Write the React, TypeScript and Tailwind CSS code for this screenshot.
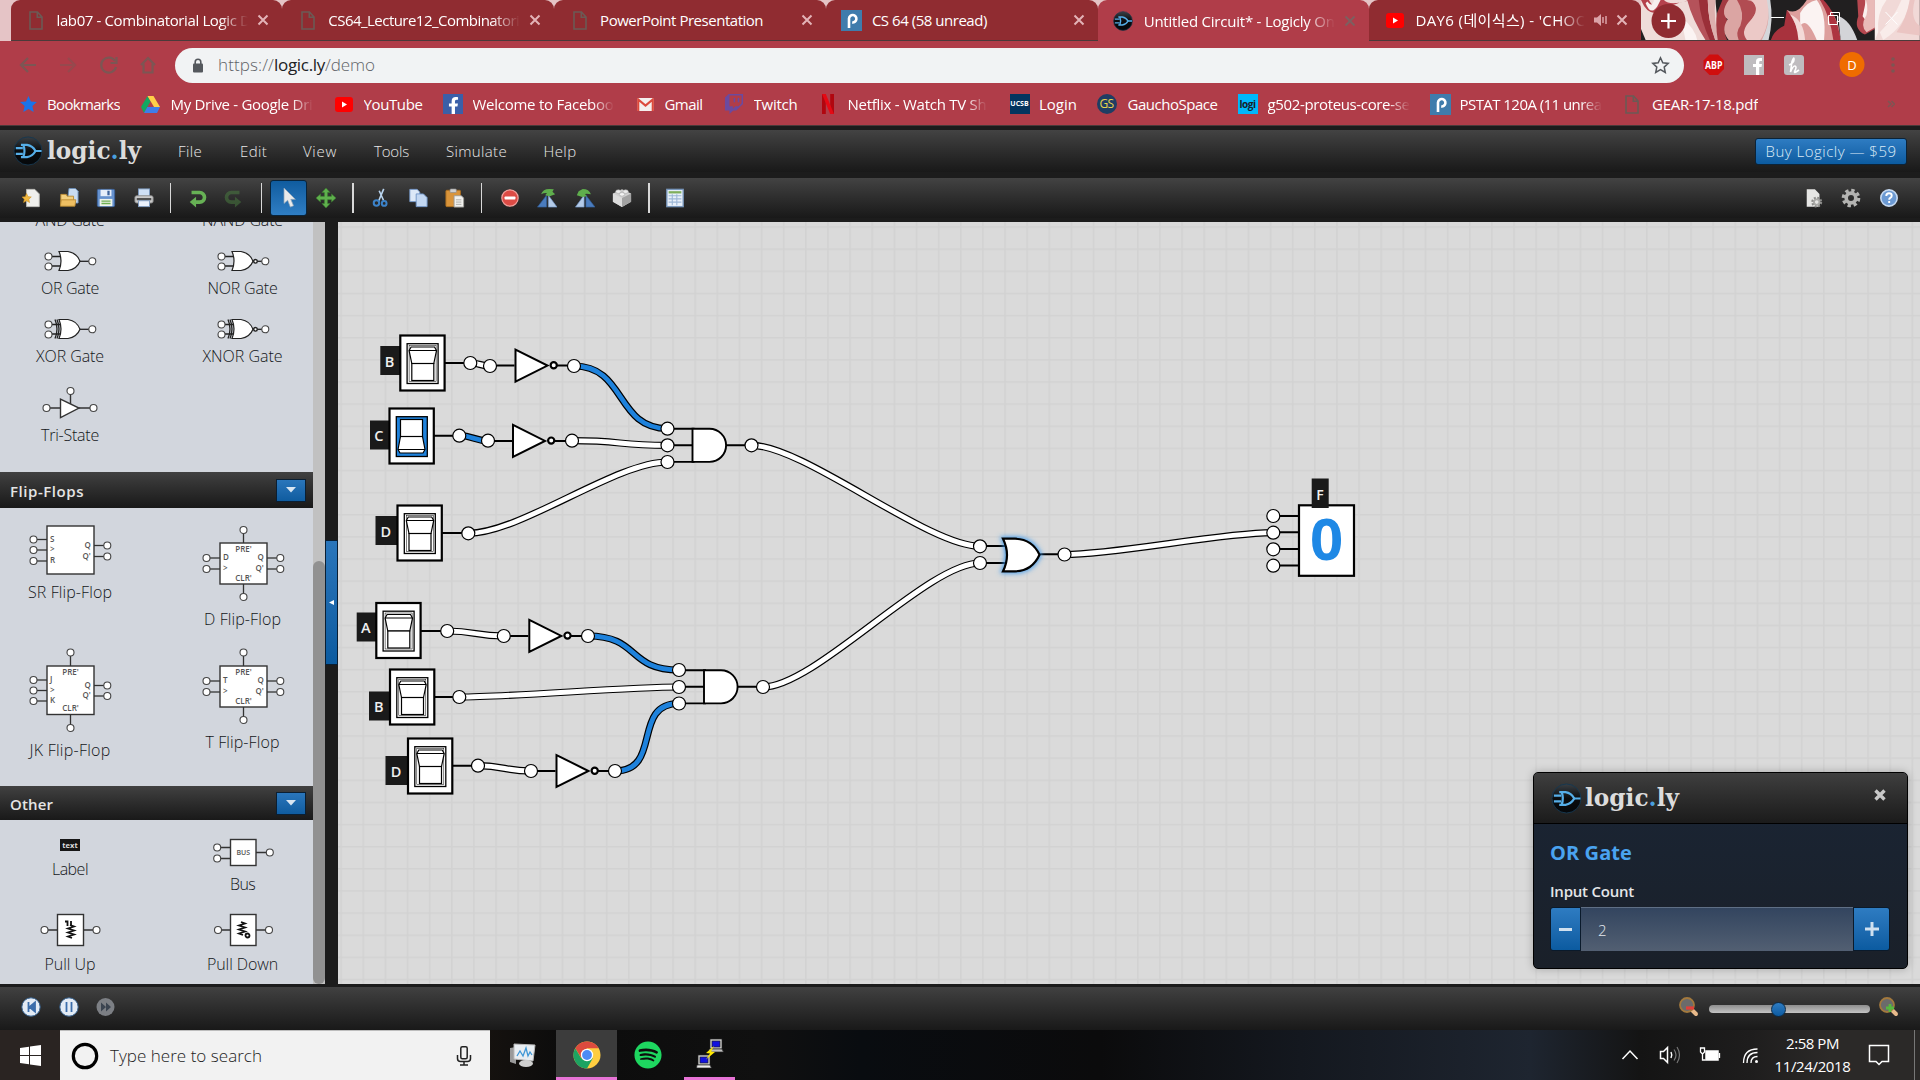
import React, { useLayoutEffect, useRef, useState } from "react";
import { FaSpotify, FaFacebookF, FaTwitch } from "react-icons/fa";

const UI = "font-['Open_Sans','Noto_Sans_CJK_KR',sans-serif]";

/** Single line of text whose tracking is adjusted so that it spans `w` pixels. */
function Fit({ w, className = "", children }: { w: number; className?: string; children: string }) {
  const ref = useRef<HTMLSpanElement>(null);
  const [ls, setLs] = useState(0);
  useLayoutEffect(() => {
    const el = ref.current;
    if (!el) return;
    const n = el.getBoundingClientRect().width;
    setLs((w - n) / children.length);
  }, []);
  return (
    <span ref={ref} className={"inline-block shrink-0 whitespace-nowrap " + className} style={{ letterSpacing: ls }}>
      {children}
    </span>
  );
}

const DocIcon = () => (
  <svg width="14" height="19" viewBox="0 0 14 19" fill="none" stroke="#6b5a55" strokeWidth="1.6">
    <path d="M1 1h7.5L13 6v12H1zM8.300 1v5.200H13" />
  </svg>
);
const PIcon = () => (
  <svg width="21" height="21" viewBox="0 0 21 21">
    <rect width="21" height="21" fill="#3f7cac" />
    <path d="M8 18V8.500a3.700 3.700 0 1 1 3.200 3.900" fill="none" stroke="#fff" strokeWidth="2.600" />
  </svg>
);
const YtIcon = () => (
  <svg width="18" height="15" viewBox="0 0 18 15">
    <rect width="18" height="15" rx="3" fill="#f00" />
    <path d="M7 4.500l5 3-5 3z" fill="#fff" />
  </svg>
);
const LogoMark = ({ size }: { size: number }) => (
  <svg width={size} height={size} viewBox="-16 -16 32 32" className="shrink-0">
    <defs>
      <linearGradient id="mark" x1="0" y1="0" x2="0" y2="1">
        <stop offset="0" stopColor="#3a3f44" />
        <stop offset=".5" stopColor="#0a0c0e" />
        <stop offset="1" stopColor="#05080b" />
      </linearGradient>
    </defs>
    <circle r="15" fill="url(#mark)" stroke="#17384f" strokeWidth="1" />
    <g fill="none" stroke="#55aee8" strokeWidth="2.300">
      <path d="M-13-3h7.500M-13 3h7.500M7 0h7.500" />
      <path d="M-7.500-6.500H-1Q5-5.500 8 0Q5 5.500-1 6.500H-7.500M-5-6.500Q-2.500 0-5 6.500" />
    </g>
  </svg>
);

const CloseX = ({ color = "#dba3a8" }: { color?: string }) => (
  <svg width="12" height="12" viewBox="0 0 12 12" stroke={color} strokeWidth="2" className="shrink-0">
    <path d="M1.500 1.500l9 9M10.500 1.500l-9 9" />
  </svg>
);

const fade = "[mask-image:linear-gradient(90deg,#000_85%,transparent)]";

function Tab({ icon, title, w, active, audio, sep, clip }: any) {
  return (
    <div
      className={
        "relative flex h-[41px] w-[271.8px] shrink-0 items-center rounded-t-[9px] pr-[13px] " +
        (active ? "bg-[#b03d49]" : "border-b border-[#4b3a3a] bg-[#902c31]")
      }
    >
      <div className="flex w-[46px] shrink-0 items-center justify-center pl-[5px]">{icon}</div>
      <div className={"flex-1 overflow-hidden text-[15px] leading-[24px] text-white " + (clip ? fade : "")}>
        <Fit w={w}>{title}</Fit>
      </div>
      {audio && (
        <svg width="14" height="14" viewBox="0 0 14 14" className="ml-[9px] mr-[8px] shrink-0" fill="#dba3a8">
          <path d="M0 4.500h3L7 1v12L3 9.500H0z" />
          <path d="M9 4v6M12 3v8" stroke="#dba3a8" strokeWidth="1.500" />
        </svg>
      )}
      <div className={"flex w-[12px] justify-center " + (audio ? "" : "ml-[9px]")}>
        <CloseX color={active ? "#7d5f60" : "#e3b3b7"} />
      </div>
      {sep && <div className="absolute top-[9px] right-[-1px] h-[25px] w-px bg-[#b9696f]" />}
    </div>
  );
}

function Petals() {
  return (
    <svg className="absolute inset-0 h-full w-full" viewBox="61 0 839 124" preserveAspectRatio="none">
      <rect x="61" width="839" height="124" fill="#211f20" />
      <path d="M61 0H285L296 124H75L61 90z" fill="#efdcd9" />
      <path d="M61 0Q85 60 130 30T235 0L205 0Q150 20 130 0H110Q100 30 85 0z" fill="#b5414c" />
      <path d="M75 10Q90 50 110 20L120 0H100Q95 25 80 5z" fill="#f7efee" />
      <path d="M200 0Q215 60 255 124H275Q245 60 240 0z" fill="#b5525a" />
      <path d="M235 0Q240 60 268 124H285Q262 60 262 0z" fill="#9a2f38" />
      <path d="M262 0H285Q278 60 296 124H284Q262 60 262 0z" fill="#ddb0ae" />
      <path d="M180 50Q225 90 230 124H195z" fill="#fbf4f3" />
      <path d="M306 0H330Q310 40 322 70Q305 95 320 124H292Q284 70 290 40z" fill="#a33a41" />
      <path d="M325 0Q298 40 322 60Q300 95 325 124H440Q450 80 445 0z" fill="#dba5a3" />
      <path d="M350 0Q375 40 360 80Q345 100 355 124H380Q370 90 400 50T380 0z" fill="#b14c52" />
      <path d="M392 0Q425 30 385 70Q360 100 380 124H420Q450 80 445 0z" fill="#ecc9c7" />
      <path d="M440 0Q452 60 435 100L425 124H445Q460 60 450 0z" fill="#d5d6da" />
      <path d="M452 124Q460 95 492 80L500 30L528 65L540 124z" fill="#a8323d" />
      <path d="M500 30Q530 50 560 0H600Q640 30 655 80L662 124H540Q530 70 500 30z" fill="#dd9f9d" />
      <path d="M540 40Q560 5 590 0Q620 40 612 124H590Q560 50 540 80z" fill="#fbf3f2" />
      <path d="M510 45Q550 60 555 124H535Q530 70 510 45z" fill="#f3dad8" />
      <path d="M600 0H610Q650 40 662 124H640Q630 50 600 0z" fill="#ad3541" />
      <path d="M655 50Q690 60 712 124H662z" fill="#d3d4d8" />
      <path d="M712 0H765V90L735 107Q700 90 715 50z" fill="#b5474f" />
      <path d="M735 0H765V85L740 100Q720 80 738 50z" fill="#e9bab8" />
      <path d="M738 0Q748 30 735 60L728 50Q735 20 738 0z" fill="#fbf0ee" />
      <rect x="765" width="135" height="124" fill="#f1d9d7" />
      <path d="M765 0H800Q770 40 775 100L765 124z" fill="#faf0ee" />
      <path d="M845 0Q820 60 780 100L790 124Q860 80 870 0z" fill="#f9ecea" />
      <path d="M870 0Q860 60 830 100L900 110V80Q870 60 885 0z" fill="#ebc5c3" />
    </svg>
  );
}

function TabStrip() {
  return (
    <div className="relative flex h-[41px] bg-[#e5c4c6]">
      <div className="w-[10.500px] shrink-0" />
      <Tab sep clip icon={<DocIcon />} title="lab07 - Combinatorial Logic D" w={194} />
      <Tab sep clip icon={<DocIcon />} title="CS64_Lecture12_Combinatori" w={191} />
      <Tab sep icon={<DocIcon />} title="PowerPoint Presentation" w={163} />
      <Tab icon={<PIcon />} title="CS 64 (58 unread)" w={115} />
      <Tab active clip icon={<LogoMark size={20} />} title="Untitled Circuit* - Logicly On" w={191} />
      <Tab clip audio icon={<YtIcon />} title="DAY6 (데이식스) - 'CHOC" w={170} />
      <div className="relative flex-1 overflow-hidden border-b border-[#4b3a3a]">
        <Petals />
        <svg className="absolute inset-0" width="280" height="41" viewBox="1641 0 280 41" fill="none">
          <circle cx="1668.500" cy="21" r="17" fill="#902c31" />
          <path d="M1661 21h15M1668.500 13.500v15" stroke="#fff" strokeWidth="2.200" />
          <g stroke="#fff" strokeWidth="1">
            <path d="M1771 17.500h13M1828.500 15.500h9v9h-9zM1830.500 15.500v-3h9v9h-2M1885.500 12l12 12.500M1897.500 12l-12 12.500" />
          </g>
        </svg>
      </div>
    </div>
  );
}

function AddressBar() {
  return (
    <div className="flex h-[43px] items-center bg-[#b03d49] pt-[5px]">
      <svg width="175" height="38" viewBox="0 46 175 38" fill="none" stroke="#7c5654" strokeWidth="2.200" className="shrink-0">
        <path d="M36 65H21M28 58l-7 7 7 7" />
        <path d="M60 65h14M68 58l7 7-7 7" stroke="#96494e" />
        <path d="M115 61a7.500 7.500 0 1 0 1 6M116.500 57v6h-6" />
        <path d="M141 65l7-7 7 7M143.500 63.500V72.500h9V63.500" />
      </svg>
      <div className="flex h-[35px] w-[1509px] items-center rounded-full bg-[#f1f3f4] pr-[14px] pl-[17px]">
        <svg width="12" height="15" viewBox="0 0 12 15">
          <rect x="1" y="5.500" width="10" height="9" rx="1" fill="#54585d" />
          <path d="M3.200 6V4a2.800 2.800 0 0 1 5.600 0v2" fill="none" stroke="#54585d" strokeWidth="1.600" />
        </svg>
        <div className="ml-[14px] flex flex-1 text-[17px] leading-[24px] font-light text-[#5f6368]">
          <Fit w={56}>https://</Fit>
          <Fit w={51} className="font-normal text-[#202124]">logic.ly</Fit>
          <Fit w={50}>/demo</Fit>
        </div>
        <svg width="19" height="18" viewBox="0 0 19 18" fill="none" stroke="#54585d" strokeWidth="1.500">
          <path d="M9.500 1.800l2.300 5 5.400.6-4 3.700 1.100 5.400-4.800-2.800-4.800 2.800 1.100-5.400-4-3.700 5.400-.6z" />
        </svg>
      </div>
      <svg width="236" height="38" viewBox="1684 46 236 38" className="shrink-0">
        <path d="M1697.500 54.500h8.500l6 6v8.500l-6 6h-8.500l-6-6v-8.500z" transform="translate(12)" fill="#d00e0e" />
        <text x="1713.800" y="69" textAnchor="middle" fontSize="10.500" fontWeight="700" fill="#fff" fontFamily="Open Sans" textLength="17.500" lengthAdjust="spacingAndGlyphs">ABP</text>
        <rect x="1744" y="55" width="20" height="20" fill="#bfbcbf" />
        <path d="M1756 75v-8h-3v-3h3v-2.500q0-3.500 3.500-3.500h2.500v3h-1.800q-1 0-1 1.200v1.800h2.800l-.5 3h-2.300v8z" fill="#fff" />
        <rect x="1784" y="55" width="20" height="20" rx="3" fill="#bfbcbf" />
        <path d="M1789 65q5-2 5-5.500t-2 2l-1.500 10.500q2.500-6.500 4.500-6t0 4.500 4-.5" fill="none" stroke="#fff" strokeWidth="1.600" />
        <circle cx="1852" cy="64.500" r="12.500" fill="#ef6c00" />
        <text x="1852" y="69.500" textAnchor="middle" fontSize="13" fill="#fff" fontFamily="Open Sans">D</text>
        <g fill="#7c5654">
          <circle cx="1893" cy="59" r="1.800" />
          <circle cx="1893" cy="65" r="1.800" />
          <circle cx="1893" cy="71" r="1.800" />
        </g>
      </svg>
    </div>
  );
}

const bookmarks: { cell: string; ico: string; icon: React.ReactNode; text: string; w: number; clip?: boolean }[] = [
  { cell: "w-[121px]", ico: "w-[27px]", text: "Bookmarks", w: 73, icon: (
    <svg width="17" height="16" viewBox="0 0 17 16"><path d="M8.500 0l2.400 5.400 6 .6-4.500 4 1.300 6-5.200-3.100L3.300 16l1.300-6L0 6l6-.6z" fill="#1a73e8" /></svg>) },
  { cell: "w-[194px]", ico: "w-[29.500px]", text: "My Drive - Google Dri", w: 142, clip: true, icon: (
    <svg width="19" height="17" viewBox="0 0 19 17"><path d="M6.500 0L0 11l3 6 6.500-11.500z" fill="#11a861" /><path d="M6.500 0h6L19 11h-6z" fill="#ffcf48" /><path d="M3 17h13l3-6H6.300z" fill="#3f7de8" /></svg>) },
  { cell: "w-[108px]", ico: "w-[28.500px]", text: "YouTube", w: 59, icon: <YtIcon /> },
  { cell: "w-[193.500px]", ico: "w-[29.500px]", text: "Welcome to Faceboo", w: 141, clip: true, icon: (
    <div className="flex h-[20px] w-[20px] items-end justify-center overflow-hidden bg-[#3b5fa8] text-white"><FaFacebookF size={17} /></div>) },
  { cell: "w-[87px]", ico: "w-[28px]", text: "Gmail", w: 38, icon: (
    <svg width="17" height="13" viewBox="0 0 17 13"><rect width="17" height="13" rx="1" fill="#f4efee" /><path d="M1.200 13V1.500l7.300 6 7.300-6V13" fill="none" stroke="#dc4a3d" strokeWidth="2.200" /></svg>) },
  { cell: "w-[98px]", ico: "w-[30px]", text: "Twitch", w: 44, icon: <FaTwitch size={20} color="#6b4a9f" /> },
  { cell: "w-[188px]", ico: "w-[26px]", text: "Netflix - Watch TV Sh", w: 139, clip: true, icon: (
    <svg width="12" height="20" viewBox="0 0 12 20"><path d="M0 0h3.800v20H0zM8.200 0H12v20H8.200z" fill="#b1060f" /><path d="M0 0h3.800L12 20H8.200z" fill="#e50914" /></svg>) },
  { cell: "w-[87px]", ico: "w-[29.500px]", text: "Login", w: 38, icon: (
    <div className="flex h-[20px] w-[20px] items-center justify-center bg-[#04355f] text-[7px] font-bold text-white">UCSB</div>) },
  { cell: "w-[141px]", ico: "w-[31px]", text: "GauchoSpace", w: 90, icon: (
    <div className="flex h-[20px] w-[20px] items-center justify-center rounded-full bg-[#1f3d63] text-[12px] tracking-tighter text-[#e8d44d]">GS</div>) },
  { cell: "w-[192px]", ico: "w-[30px]", text: "g502-proteus-core-se", w: 142, clip: true, icon: (
    <div className="flex h-[20px] w-[20px] items-center justify-center bg-[#00b8fc] text-[10px] leading-none font-bold tracking-tighter text-[#17202a]">logi</div>) },
  { cell: "w-[195px]", ico: "w-[30px]", text: "PSTAT 120A (11 unrea", w: 142, clip: true, icon: <PIcon /> },
  { cell: "w-[140px]", ico: "w-[27.500px]", text: "GEAR-17-18.pdf", w: 106, icon: <DocIcon /> },
];

function Bookmarks() {
  return (
    <div className="flex h-[42px] items-center border-b border-[#4b3a3a] bg-[#b03d49] pb-[1px] pl-[20px]">
      {bookmarks.map((b) => (
        <div key={b.text} className={"flex shrink-0 items-center " + b.cell}>
          <div className={"flex shrink-0 items-center " + b.ico}>{b.icon}</div>
          <div className={"overflow-hidden text-[15px] leading-[24px] text-white " + (b.clip ? fade : "")}>
            <Fit w={b.w}>{b.text}</Fit>
          </div>
        </div>
      ))}
      <svg width="8" height="8" viewBox="0 0 8 8" className="mr-[25px] ml-auto" fill="none" stroke="#7c5654" strokeWidth="1.500">
        <path d="M1 1l3 3-3 3M4.500 1l3 3-3 3" />
      </svg>
    </div>
  );
}

function Wordmark({ w }: { w: number }) {
  return (
    <svg width={w + 4} height="32" viewBox={`0 0 ${w + 4} 32`} className="shrink-0">
      <text x="0" y="24" fontFamily="DejaVu Serif" fontWeight="700" fontSize="23.500" fill="#dcdcdc" textLength={w} lengthAdjust="spacingAndGlyphs">
        logic<tspan fill="#4a9fdf">.</tspan>ly
      </text>
    </svg>
  );
}

const menu = [
  { t: "File", cell: "w-[62px]", w: 24 },
  { t: "Edit", cell: "w-[63px]", w: 27 },
  { t: "View", cell: "w-[71px]", w: 34 },
  { t: "Tools", cell: "w-[72px]", w: 35 },
  { t: "Simulate", cell: "w-[97.500px]", w: 61 },
  { t: "Help", cell: "w-[60px]", w: 33 },
];

function MenuBar() {
  return (
    <div className="flex h-[42px] items-center bg-linear-to-b from-[#434343] to-[#191919] pl-[13px]">
      <LogoMark size={30} />
      <div className="w-[134px] pl-[4px]">
        <Wordmark w={94} />
      </div>
      {menu.map((m) => (
        <div key={m.t} className={"pl-px text-[15px] font-light text-[#e8e8e8] " + m.cell}>
          <Fit w={m.w}>{m.t}</Fit>
        </div>
      ))}
      <div className="mr-[13px] ml-auto flex h-[27px] w-[152px] items-center justify-center rounded-[3px] border border-[#0b2338] bg-linear-to-b from-[#2e7cc2] to-[#0b5ba0] text-[15px] font-light text-[#dcebf7]">
        <Fit w={131}>Buy Logicly — $59</Fit>
      </div>
    </div>
  );
}

const Slot = ({ className, children }: { className: string; children: React.ReactNode }) => (
  <div className={"flex shrink-0 items-center justify-center " + className}>
    <svg width="20" height="20" viewBox="0 0 22 22">{children}</svg>
  </div>
);
const Bar = () => <div className="h-[30px] w-[1.5px] shrink-0 bg-[#d8d8d8]" />;

function ToolBar() {
  return (
    <div className="flex h-[40px] items-center bg-linear-to-b from-[#434343] to-[#191919] pl-[12.500px]">
      <Slot className="w-[38px]">
        <path d="M5 1.500h9l5 5v14H5z" fill="#efefec" stroke="#b9b9b5" />
        <path d="M5 6l1.600 3.500 3.600.3-2.700 2.500.8 3.700L5 14l-3.300 2 .8-3.700L0 9.800l3.500-.3z" fill="#f0b840" stroke="#c98c1c" strokeWidth=".6" />
      </Slot>
      <Slot className="w-[37px]">
        <path d="M11 .5h7l3 3v13H9z" fill="#c9dcf1" stroke="#6b90bb" />
        <path d="M2 7h6l1 2h7v10H2z" fill="#f2cf7f" stroke="#b98a32" />
        <path d="M1.500 20l1-7h16l-1 7z" fill="#eebf62" stroke="#b98a32" />
      </Slot>
      <Slot className="w-[37px]">
        <rect x="1.500" y="1.500" width="19" height="19" rx="1.500" fill="#6692cf" stroke="#3d639c" />
        <rect x="5" y="2" width="12" height="7" fill="#e6eefa" />
        <rect x="12.500" y="3" width="2.500" height="5" fill="#3d639c" />
        <rect x="4" y="12" width="14" height="8" fill="#eef3ea" />
        <path d="M6 14.500h10M6 17h10" stroke="#6fb052" strokeWidth="1.500" />
      </Slot>
      <Slot className="w-[38px]">
        <rect x="5" y="1" width="12" height="9" fill="#cfe0f5" stroke="#7d9ac0" />
        <rect x="1" y="8.500" width="20" height="8" rx="2" fill="#c9c9c9" stroke="#8b8b8b" />
        <rect x="3" y="11" width="16" height="2.500" fill="#505050" />
        <rect x="5" y="14" width="12" height="6.500" fill="#eaf1fb" stroke="#7d9ac0" />
      </Slot>
      <div className="w-[7px] shrink-0" />
      <Bar />
      <Slot className="ml-[7.500px] w-[37px]">
        <path d="M5 5h9a5 5 0 0 1 0 10.500H9" fill="none" stroke="#67b155" strokeWidth="4" />
        <path d="M10 9.500v12L3 15.500z" fill="#67b155" />
      </Slot>
      <Slot className="w-[37px] opacity-45">
        <path d="M17 5H8a5 5 0 0 0 0 10.500H13" fill="none" stroke="#4f8a44" strokeWidth="4" />
        <path d="M12 9.500v12l7-6z" fill="#4f8a44" />
      </Slot>
      <div className="w-[8px] shrink-0" />
      <Bar />
      <div className="ml-[8px] flex h-[36px] w-[37px] shrink-0 items-center justify-center rounded-[3px] border border-[#08243c] bg-linear-to-b from-[#0f5c9f] to-[#2f7ec4]">
        <svg width="20" height="20" viewBox="0 0 22 22">
          <path d="M5.500 0v17l4-3.500 3 7.500 3.500-1.500-3-7H18z" fill="#eaeaea" stroke="#8fa6ba" strokeWidth=".8" />
        </svg>
      </div>
      <Slot className="w-[37px]">
        <path d="M11 0l4.500 5H12.800v4.200H17V6.500l5 4.500-5 4.500v-2.700h-4.200V17h2.700L11 22l-4.500-5h2.700v-4.200H5v2.700L0 11l5-4.500v2.700h4.200V5H6.500z" fill="#5fb04d" stroke="#3b7a30" strokeWidth=".7" />
      </Slot>
      <div className="w-[8px] shrink-0" />
      <Bar />
      <Slot className="ml-[8px] w-[38px]">
        <path d="M14 1L8.500 14M9 3l5 11" stroke="#b9d4ee" strokeWidth="1.800" />
        <circle cx="6" cy="16.500" r="3" fill="none" stroke="#3c82c8" strokeWidth="2.200" />
        <circle cx="14.500" cy="17" r="2.600" fill="none" stroke="#3c82c8" strokeWidth="2.200" />
      </Slot>
      <Slot className="w-[37px]">
        <path d="M2 1.500h8l3 3V15H2z" fill="#dce8f7" stroke="#6f94c6" />
        <path d="M9 6.500h8l4 4v10H9z" fill="#c2d7f2" stroke="#6f94c6" />
      </Slot>
      <Slot className="w-[37px]">
        <rect x="1" y="2.500" width="16" height="18" rx="1" fill="#d9943a" stroke="#a96c1e" />
        <rect x="5.500" y="1" width="7" height="4" rx="1" fill="#cfcfcf" stroke="#888" strokeWidth=".7" />
        <path d="M10 8.500h8l2.500 2.500v10H10z" fill="#f1f1ee" stroke="#9c9c98" />
        <path d="M12 13h6M12 15.500h6M12 18h6" stroke="#a9a9a4" />
      </Slot>
      <div className="w-[7px] shrink-0" />
      <Bar />
      <Slot className="ml-[9px] w-[37px]">
        <circle cx="11" cy="11" r="9" fill="#dc4b45" stroke="#f0a09c" strokeWidth="1.300" />
        <rect x="5" y="9.300" width="12" height="3.400" rx=".8" fill="#fff" />
      </Slot>
      <Slot className="w-[38px]">
        <path d="M10.500 8v13H.5z" fill="#4a7cbe" stroke="#2f5a94" strokeWidth=".7" />
        <path d="M12.500 8v13H22z" fill="#b4cbe8" stroke="#6f94c6" strokeWidth=".7" />
        <path d="M4.500 7q2-6 9-6l5 .5-1.500 2.500 3 3-6 2-5-1 2-2.500q-3-.5-6.500 1.500z" fill="#5fae4d" />
      </Slot>
      <Slot className="w-[37px]">
        <path d="M12 8v13h10z" fill="#4a7cbe" stroke="#2f5a94" strokeWidth=".7" />
        <path d="M10 8v13H.5z" fill="#b4cbe8" stroke="#6f94c6" strokeWidth=".7" />
        <path d="M17.500 7q-2-6-9-6L4 3.500 2 8l6 2 5-1-2-2.500q3-.5 6.500.5z" fill="#5fae4d" />
      </Slot>
      <Slot className="w-[37px]">
        <path d="M1 6l10-4.500L21 6v9l-10 6L1 15z" fill="#d0d0d0" />
        <path d="M11 11l10-5v9l-10 6z" fill="#a2a2a2" />
        <path d="M1 6l10 5v10L1 15z" fill="#dcdcdc" />
        <ellipse cx="7" cy="4" rx="3" ry="2" fill="#ececec" stroke="#aaa" strokeWidth=".7" />
        <ellipse cx="15" cy="4" rx="3" ry="2" fill="#ececec" stroke="#aaa" strokeWidth=".7" />
        <ellipse cx="11" cy="7" rx="3" ry="2" fill="#f4f4f4" stroke="#aaa" strokeWidth=".7" />
      </Slot>
      <div className="w-[8px] shrink-0" />
      <Bar />
      <Slot className="ml-[7px] w-[37px]">
        <rect x="2" y="1.500" width="18" height="19" fill="#e8f0fa" stroke="#7896bb" strokeWidth="1.500" />
        <rect x="4" y="3.500" width="14" height="2.500" fill="#7fae5c" />
        <path d="M4 8.500h14M4 12h14M4 15.500h14M8 7v12M13 7v12" stroke="#9cb6d6" strokeWidth="1.200" />
      </Slot>
      <div className="mr-[13px] ml-auto flex">
        <Slot className="w-[36px]">
          <path d="M3 1.500h9l5 5v14H3z" fill="#e6e6e4" />
          <circle cx="14" cy="15.500" r="4.500" fill="none" stroke="#8c8c8a" strokeWidth="3" strokeDasharray="2 1.534" />
          <circle cx="14" cy="15.500" r="3" fill="none" stroke="#a9a9a6" strokeWidth="2" />
        </Slot>
        <Slot className="w-[38px]">
          <circle cx="11" cy="11" r="8.500" fill="none" stroke="#b4b4b2" strokeWidth="3.500" strokeDasharray="3.700 2.976" />
          <circle cx="11" cy="11" r="5.300" fill="none" stroke="#b4b4b2" strokeWidth="4" />
        </Slot>
        <Slot className="w-[37px]">
          <circle cx="11" cy="11" r="9" fill="#6c9ad3" stroke="#c5d8ef" strokeWidth="1.800" />
          <path d="M8 8.800q0-3 3-3t3 2.600q0 1.500-1.600 2.400-1.200.7-1.200 2M11.200 14.300v2.300" fill="none" stroke="#fff" strokeWidth="2.100" />
        </Slot>
      </div>
    </div>
  );
}

/* ---------- component palette ---------- */

const Pin = ({ x, y }: { x: number; y: number }) => <circle cx={x} cy={y} r="3.500" fill="#fff" stroke="#444" strokeWidth="1.100" />;

function MiniGate({ cy, xor, not }: { cy: number; xor?: boolean; not?: boolean }) {
  return (
    <g transform={`translate(0 ${cy})`} stroke="#222" strokeWidth="1.300" fill="none">
      <path d="M-20-4.500h11M-20 5h11" />
      <path d="M9 .3h11" />
      <path d="M-11-9.500H-2Q7-8 10 .3Q7 8-2 9.500H-11Q-7 0-11-9.500z" fill="#fff" strokeWidth="1.200" />
      {xor && <path d="M-15-9.500Q-11 0-15 9.500M-13-9.500Q-9 0-13 9.500" />}
      {not && <circle cx="12.500" cy=".3" r="1.800" fill="#fff" strokeWidth="1.400" />}
      <Pin x={-21.500} y={-4.500} />
      <Pin x={-21.500} y={5.500} />
      <Pin x={22.300} y={0.300} />
    </g>
  );
}

function MiniFF({ t, b, l, r, ins, pre }: { t: number; b: number; l: number[]; r: number[]; ins: string[]; pre?: [number, number] }) {
  const tx = { fontFamily: "Open Sans", fontSize: 8, fill: "#555", stroke: "none", fontWeight: 600 } as const;
  return (
    <g stroke="#333" strokeWidth="1.300" fill="none">
      {l.map((y) => <path key={y} d={`M-34 ${y}h11`} />)}
      {r.map((y) => <path key={y} d={`M24 ${y}h11`} />)}
      {pre && <path d={`M.500 ${pre[0]}V${t}M.500 ${b}V${pre[1]}`} />}
      <rect x="-23" y={t} width="47" height={b - t} fill="#fff" strokeWidth="1.400" />
      {l.map((y) => <Pin key={y} x={-36.500} y={y} />)}
      {r.map((y) => <Pin key={y} x={37.300} y={y} />)}
      {pre && <Pin x={0.500} y={pre[0]} />}
      {pre && <Pin x={0.500} y={pre[1]} />}
      {l.map((y, i) => <text key={y} {...tx} x="-20" y={y + 2.200}>{ins[i]}</text>)}
      <text {...tx} x="14.500" y={r[0] + 2.200}>Q</text>
      <text {...tx} x="12.500" y={r[1] + 2.200}>Q'</text>
      {pre && <text {...tx} x=".5" y={t + 9} textAnchor="middle">PRE'</text>}
      {pre && <text {...tx} x=".5" y={b - 3.500} textAnchor="middle">CLR'</text>}
    </g>
  );
}

function Item({ h, label, w, children }: { h: number; label: string; w: number; children?: React.ReactNode }) {
  return (
    <div className="flex flex-col items-center">
      <svg width="100" height={h} viewBox={`-50 0 100 ${h}`} className="shrink-0">{children}</svg>
      <div className="h-[22px] text-[16px] leading-[24px] font-light text-[#14161a]">
        <Fit w={w}>{label}</Fit>
      </div>
    </div>
  );
}
const Row = ({ children }: { children: React.ReactNode }) => (
  <div className="grid shrink-0 grid-cols-[140px_205px] items-start">{children}</div>
);
function Header({ title, w, className }: { title: string; w: number; className: string }) {
  return (
    <div className={"flex shrink-0 items-center justify-between bg-linear-to-b from-[#414141] to-[#191919] pr-[7px] pl-[10px] " + className}>
      <div className="pt-[2px] text-[15px] font-semibold text-[#e4e4e4]"><Fit w={w}>{title}</Fit></div>
      <div className="flex h-[23px] w-[30px] items-center justify-center border border-[#0a1f33] bg-linear-to-b from-[#2a76bb] to-[#0f5c9f]">
        <svg width="10" height="6" viewBox="0 0 10 6"><path d="M0 0h10L5 5.500z" fill="#d9e6f2" /></svg>
      </div>
    </div>
  );
}
const ZIG = "M-1-7l4 1.500-6 2 6 2-6 2 6 2-6 2 4 1.500";

function Sidebar() {
  return (
    <div className="flex h-[762px] w-[313px] shrink-0 flex-col overflow-hidden bg-[#d2d6dd]">
      <div className="-mt-[14px] grid shrink-0 grid-cols-[140px_205px]">
        <Item h={0} label="AND Gate" w={69} />
        <Item h={0} label="NAND Gate" w={81} />
      </div>
      <div className="h-px shrink-0" />
      <Row>
        <Item h={45} label="OR Gate" w={58}><MiniGate cy={30} /></Item>
        <Item h={45} label="NOR Gate" w={70}><MiniGate cy={30} not /></Item>
      </Row>
      <Row>
        <Item h={46} label="XOR Gate" w={68}><MiniGate cy={31} xor /></Item>
        <Item h={46} label="XNOR Gate" w={80}><MiniGate cy={31} xor not /></Item>
      </Row>
      <Row>
        <Item h={57} label="Tri-State" w={58}>
          <g stroke="#333" strokeWidth="1.400" fill="none">
            <path d="M-20 42H-9.500M9 42h11M.500 28v10" />
            <path d="M-9.500 33v18.500L9 42z" fill="#fff" />
            <Pin x={-23.500} y={42} /><Pin x={23.500} y={42} /><Pin x={0.500} y={25} />
          </g>
        </Item>
      </Row>
      <div className="h-[27px] shrink-0" />
      <Header title="Flip-Flops" w={74} className="h-[36px]" />
      <Row>
        <Item h={72} label="SR Flip-Flop" w={84}><MiniFF t={18} b={66} l={[31.500, 42, 53]} r={[37.500, 48.500]} ins={["S", ">", "R"]} /></Item>
        <Item h={99} label="D Flip-Flop" w={77}><MiniFF t={35} b={76} l={[50, 61]} r={[50, 61]} ins={["D", ">"]} pre={[22, 89]} /></Item>
      </Row>
      <Row>
        <Item h={109} label="JK Flip-Flop" w={81}><MiniFF t={37} b={85.500} l={[51, 61.500, 72]} r={[56.500, 67]} ins={["J", ">", "K"]} pre={[23.500, 99]} /></Item>
        <Item h={101} label="T Flip-Flop" w={74}><MiniFF t={37} b={78} l={[52, 63]} r={[52, 63]} ins={["T", ">"]} pre={[23.500, 91]} /></Item>
      </Row>
      <div className="h-[26px] shrink-0" />
      <Header title="Other" w={43} className="h-[34px]" />
      <Row>
        <Item h={37} label="Label" w={36}>
          <rect x="-10" y="19" width="20" height="12" fill="#161616" />
          <text x="0" y="27.500" textAnchor="middle" fontSize="7.500" fontWeight="700" fill="#ddd" fontFamily="Open Sans">text</text>
        </Item>
        <Item h={52} label="Bus" w={25}>
          <g stroke="#333" strokeWidth="1.400" fill="none">
            <path d="M-23 27.500h11M-23 38.500h11M13 32.500h11" />
            <rect x="-12.500" y="19.500" width="25.500" height="26" fill="#fff" />
            <Pin x={-25.800} y={27.500} /><Pin x={-25.800} y={38.500} /><Pin x={26.800} y={32.500} />
          </g>
          <text x=".3" y="34.800" textAnchor="middle" fontSize="7" fill="#555" fontFamily="Open Sans" fontWeight="600">BUS</text>
        </Item>
      </Row>
      <Row>
        <Item h={58} label="Pull Up" w={51}>
          <g stroke="#333" strokeWidth="1.400" fill="none">
            <path d="M-23 36h11M13 36h11" />
            <rect x="-12.500" y="20.500" width="26" height="31" fill="#fff" />
            <Pin x={-25.500} y={36} /><Pin x={26.500} y={36} />
            <path d={ZIG} transform="translate(1 38)" stroke="#111" strokeWidth="1.800" />
            <path d="M-5 27.500h2.500v4.500M1 27v4" stroke="#111" strokeWidth="1.800" />
          </g>
        </Item>
        <Item h={58} label="Pull Down" w={71}>
          <g stroke="#333" strokeWidth="1.400" fill="none">
            <path d="M-23 36h11M13 36h11" />
            <rect x="-12.500" y="20.500" width="25.500" height="31" fill="#fff" />
            <Pin x={-25} y={36} /><Pin x={26} y={36} />
            <path d={ZIG} transform="translate(-1 35)" stroke="#111" strokeWidth="1.800" />
            <circle cx="4.500" cy="41.500" r="2" stroke="#111" strokeWidth="1.800" />
          </g>
        </Item>
      </Row>
    </div>
  );
}

/* ---------- circuit canvas ---------- */

const BLUE = "#1e82dc";

function Switch({ x, y, on, name, lx, ly }: { x: number; y: number; on?: boolean; name: string; lx: number; ly: number }) {
  return (
    <g>
      <rect x={lx} y={ly} width={x - lx + 1} height="29" fill="#1a1a1a" />
      <text x={(lx + x) / 2 - 0.300} y={ly + 20.500} textAnchor="middle" fontSize="14.500" fontWeight="600" fill="#efefef" fontFamily="Open Sans">{name}</text>
      <g transform={`translate(${x} ${y})`} stroke="#000" fill="#fff">
        <rect x="1" y="1" width="44.300" height="55" strokeWidth="2.200" />
        <rect x="7.800" y="9.200" width="31" height="39.800" strokeWidth="1.300" fill={on ? BLUE : "#fff"} />
        {on ? (
          <g strokeWidth="1.200">
            <path d="M9.500 42L12 29h22l2.500 13-2 3.500h-23zM9.500 42h27" />
            <rect x="12" y="12" width="22" height="17" />
          </g>
        ) : (
          <g strokeWidth="1.200">
            <rect x="9.800" y="11" width="27" height="36" strokeWidth=".5" />
            <path d="M9.800 16l2-3.500h23.400l2 3.500-2.700 13h-22zM9.800 16h27.400" />
            <rect x="12.500" y="29" width="22" height="17" />
          </g>
        )}
      </g>
    </g>
  );
}

const P = ({ x, y }: { x: number; y: number }) => <circle cx={x} cy={y} r="6.500" fill="#fff" stroke="#000" strokeWidth="1.200" />;

function Wire({ a, b, on }: { a: [number, number]; b: [number, number]; on?: boolean }) {
  const dx = b[0] - a[0];
  const h = dx < 60 ? dx / 2 : Math.min(52, dx * 0.75);
  const d = `M${a[0]} ${a[1]}C${a[0] + h} ${a[1]} ${b[0] - h} ${b[1]} ${b[0]} ${b[1]}`;
  return (
    <g fill="none">
      <path d={d} stroke="#000" strokeWidth="7.200" />
      <path d={d} stroke={on ? BLUE : "#fff"} strokeWidth="4.800" />
    </g>
  );
}

const Not = ({ x, y, inX, outX }: { x: number; y: number; inX: number; outX: number }) => (
  <g stroke="#000" strokeWidth="2">
    <path d={`M${inX} ${y + 0.300}H${x}M${x + 41} ${y + 0.300}H${outX}`} />
    <path d={`M${x + 1} ${y - 15.700}v32l32-16z`} fill="#fff" strokeWidth="2" />
    <circle cx={x + 39.200} cy={y} r="3.100" fill="#fff" strokeWidth="2.200" />
  </g>
);

const And = ({ x, y, inX, outX }: { x: number; y: number; inX: number; outX: number }) => (
  <g stroke="#000" strokeWidth="1.900" fill="none">
    <path d={`M${inX} ${y - 16.600}H${x + 2}M${inX} ${y}H${x}M${inX} ${y + 16.600}H${x + 2}M${x + 33} ${y}H${outX}`} />
    <path d={`M${x} ${y - 16.600}h17a16.600 16.600 0 0 1 0 33.200h-17z`} fill="#fff" />
  </g>
);

const OR_BODY = "M1003 538.700H1015Q1032 539 1039.500 554.700Q1032 571 1015 571.300H1003Q1011 555 1003 538.700z";

function Canvas() {
  return (
    <svg width="1582" height="762" viewBox="338 222 1582 762" className="block">
      <defs>
        <pattern id="grid" x="340.300" y="226.300" width="22.130" height="22.130" patternUnits="userSpaceOnUse">
          <path d="M.8 0V22.130M0 .8H22.130" stroke="#d2d2d2" strokeWidth="1.500" />
        </pattern>
        <filter id="glow" x="-50%" y="-50%" width="200%" height="200%">
          <feGaussianBlur stdDeviation="2.500" />
        </filter>
      </defs>
      <rect x="338" y="222" width="1582" height="762" fill="#dadada" />
      <rect x="338" y="222" width="1582" height="762" fill="url(#grid)" />

      <g stroke="#000" strokeWidth="2">
        <path d="M445 363h25M434 435.700h25M442 533h26M421 631h26M434 697h25M453 765.700h25" />
        <path d="M980 546h26M980 563h26M1038 554.300h26M1273 516h26M1273 532.300h26M1273 549h26M1273 565.500h26" />
      </g>

      <Wire a={[470.300, 363]} b={[490, 366]} />
      <Wire a={[574, 366]} b={[667.500, 428.500]} on />
      <Wire a={[459.300, 435.700]} b={[488, 440.700]} on />
      <Wire a={[572, 440.700]} b={[667.500, 445.300]} />
      <Wire a={[468.300, 533.300]} b={[667.500, 462]} />
      <Wire a={[447.200, 631]} b={[503.800, 636]} />
      <Wire a={[588, 636]} b={[679, 670]} on />
      <Wire a={[459.300, 697]} b={[679, 687]} />
      <Wire a={[478, 765.700]} b={[531, 771]} />
      <Wire a={[615, 771]} b={[679, 703.500]} on />
      <Wire a={[751.500, 445.300]} b={[980, 546.300]} />
      <Wire a={[763, 687]} b={[980, 563]} />
      <Wire a={[1064.500, 554.500]} b={[1273.300, 532.700]} />

      <Not x={514.500} y={365.300} inX={490} outX={574} />
      <Not x={512} y={440.600} inX={488} outX={572} />
      <Not x={528.300} y={635.600} inX={504} outX={588} />
      <Not x={555.500} y={770.700} inX={531} outX={615} />
      <And x={692.500} y={445.300} inX={667} outX={751} />
      <And x={704} y={686.800} inX={679} outX={763} />

      <path d={OR_BODY} fill="#3d9bf0" stroke="#3d9bf0" strokeWidth="4" filter="url(#glow)" />
      <path d={OR_BODY} fill="#fff" stroke="#000" strokeWidth="2.200" />

      {[[470.300, 363], [490, 366], [574, 366], [459.300, 435.700], [488, 440.700], [572, 440.700], [468.300, 533.300],
        [667.500, 428.700], [667.500, 445.300], [667.500, 462], [751.500, 445.300], [447.200, 631], [503.800, 636], [588, 636],
        [459.300, 697], [478, 765.700], [531, 771], [615, 771], [679, 670], [679, 687], [679, 703.500], [763, 687],
        [980, 546.300], [980, 563], [1064.500, 554.500], [1273.300, 516], [1273.300, 532.700], [1273.300, 549.300], [1273.300, 565.700],
      ].map(([x, y]) => <P key={`${x}-${y}`} x={x} y={y} />)}

      <Switch x={399.300} y={334.500} name="B" lx={380.300} ly={346} />
      <Switch x={388.500} y={407.500} on name="C" lx={370} ly={420.500} />
      <Switch x={396.500} y={504.500} name="D" lx={375.500} ly={516} />
      <Switch x={375.300} y={602} name="A" lx={356.700} ly={612.500} />
      <Switch x={389} y={668.500} name="B" lx={369} ly={691.500} />
      <Switch x={407} y={737.500} name="D" lx={385.500} ly={756} />

      <rect x="1299" y="505.300" width="55" height="70.500" fill="#fff" stroke="#000" strokeWidth="2.200" />
      <text x="1326.500" y="560" textAnchor="middle" fontSize="58" fontWeight="700" fill="#1e88e5" fontFamily="Noto Sans">0</text>
      <rect x="1311.700" y="478.500" width="17" height="29.500" fill="#1a1a1a" />
      <text x="1320" y="499.500" textAnchor="middle" fontSize="14" fontWeight="600" fill="#efefef" fontFamily="Open Sans">F</text>
    </svg>
  );
}

function PropertiesPanel() {
  return (
    <div className="absolute top-[550px] left-[1195px] flex h-[197px] w-[375px] flex-col overflow-hidden rounded-[5px] border border-black bg-linear-to-b from-[#1a2535] to-[#1a2029] shadow-[0_0_8px_rgba(0,0,0,0.25)]">
      <div className="flex h-[51px] shrink-0 items-center border-b border-black bg-linear-to-b from-[#3f3f3f] to-[#1b1b1b] pl-[17px]">
        <LogoMark size={31} />
        <div className="pl-[3px]"><Wordmark w={94} /></div>
        <svg width="12" height="12" viewBox="0 0 12 12" stroke="#c9c9c9" strokeWidth="3.400" className="mr-[21px] mb-[7px] ml-auto">
          <path d="M1.500 1.500l9 9M10.500 1.500l-9 9" />
        </svg>
      </div>
      <div className="flex flex-col pr-[17px] pl-[16px]">
        <div className="mt-[14px] h-[30px] text-[20px] leading-[30px] font-bold text-[#4aa3f0]"><Fit w={82}>OR Gate</Fit></div>
        <div className="mt-[12px] h-[22px] text-[15px] leading-[22px] font-semibold text-[#e4e6e8]"><Fit w={84}>Input Count</Fit></div>
        <div className="mt-[5px] flex h-[44px]">
          <div className="flex w-[31px] items-center justify-center rounded-l-[3px] border border-[#0a1a2b] bg-linear-to-b from-[#2e7cc2] to-[#0b5ba0]">
            <div className="h-[3px] w-[13px] bg-[#cfe0ef]" />
          </div>
          <div className="flex flex-1 items-center border-t border-[#5f6f85] bg-linear-to-b from-[#33455f] to-[#525f72] pt-[2px] pl-[17px] text-[15px] font-light text-[#e4e8ee]">2</div>
          <div className="flex w-[37px] items-center justify-center rounded-r-[3px] border border-[#0a1a2b] bg-linear-to-b from-[#2e7cc2] to-[#0b5ba0]">
            <svg width="14" height="14" viewBox="0 0 14 14"><path d="M0 7h14M7 0v14" stroke="#cfe0ef" strokeWidth="3" /></svg>
          </div>
        </div>
      </div>
    </div>
  );
}

const Magnifier = ({ plus }: { plus?: boolean }) => (
  <svg width="20" height="20" viewBox="0 0 20 20" className="-mt-[3px]">
    <path d="M12 12l5 5" stroke="#e8b98a" strokeWidth="4" strokeLinecap="round" />
    <circle cx="8" cy="8" r="7" fill="#6b6b6b" stroke="#a3793d" strokeWidth="1.800" />
    {plus ? <path d="M7 11h8M11 7v8" stroke="#56b83f" strokeWidth="2.800" /> : <path d="M7 11h8" stroke="#e0403a" strokeWidth="3.200" />}
  </svg>
);

function BottomBar() {
  return (
    <div className="flex h-[46px] items-center border-t-[3px] border-[#1c1c1c] bg-linear-to-b from-[#414141] to-[#191919] pl-[21px]">
      <svg width="94" height="22" viewBox="21 996 94 22" className="-mt-[4px]">
        <g fill="#e3ebf5" stroke="#35618f" strokeWidth="1">
          <circle cx="31" cy="1007" r="9.200" /><circle cx="69" cy="1007" r="9.200" />
        </g>
        <circle cx="105.500" cy="1007" r="9" fill="#7c7f84" />
        <path d="M28.500 1002v10M35 1002.500v9l-5.500-4.500zM66.500 1002v10M71.500 1002v10" fill="#3b6dab" stroke="#3b6dab" strokeWidth="1.800" />
        <path d="M101 1002.500l5 4.500-5 4.500zM106 1002.500l5 4.500-5 4.500z" fill="#3b4450" />
      </svg>
      <div className="mr-[21px] ml-auto flex items-center">
        <Magnifier />
        <div className="relative mr-[9px] ml-[10px] h-[8px] w-[161px] rounded-full bg-linear-to-b from-[#8e8e8e] to-[#c4c4c4]">
          <div className="absolute -top-[3px] left-[62px] h-[15px] w-[15px] rounded-full border border-[#0a2c4b] bg-linear-to-b from-[#2e7cc2] to-[#0b5ba0]" />
        </div>
        <Magnifier plus />
      </div>
    </div>
  );
}

function Taskbar() {
  return (
    <div className="flex h-[50px] items-stretch bg-[linear-gradient(90deg,#14120f_0px,#16120f_480px,#0c0c0c_560px,#101010_760px,#090c10_860px,#0b0b0c_1100px,#14181f_1300px,#1e2530_1530px,#141414_1640px,#1e1d1d_1750px,#2b2928_1830px)]">
      <div className="flex w-[60px] items-center justify-center bg-[#2a2422]">
        <svg width="21" height="21" viewBox="0 0 21 21" fill="#fff"><path d="M0 3l9-1.300V10H0zM10 1.500L21 0v10H10zM0 11h9v8.300L0 18zM10 11h11v10l-11-1.500z" /></svg>
      </div>
      <div className="flex w-[430px] items-center border-t border-[#bdbdbd] bg-[#f2f2f2] pr-[18px] pl-[11px]">
        <svg width="28" height="28" viewBox="0 0 28 28"><circle cx="14" cy="14" r="11.700" fill="none" stroke="#000" strokeWidth="3.200" /></svg>
        <div className="ml-[11px] flex-1 text-[17px] font-light text-[#1c1c1c]"><Fit w={152}>Type here to search</Fit></div>
        <svg width="16" height="20" viewBox="0 0 16 20" fill="none" stroke="#222" strokeWidth="1.500">
          <rect x="4.800" y=".8" width="6.400" height="12" rx="1.500" /><path d="M1.500 9v3.500q0 3 3 3h7q3 0 3-3V9M8 15.500v3M4 19h8" />
        </svg>
      </div>
      <div className="flex w-[66px] items-center justify-center">
        <svg width="28" height="26" viewBox="0 0 28 26">
          <path d="M1 6l6-1v17l-6-2z" fill="#9a9a9a" />
          <path d="M5 2l21 1-2 16-19-2z" fill="#e9eef2" stroke="#b9b9b9" />
          <path d="M8 14l3-5 3 5 3-8 2 8 2-4 2 3" fill="none" stroke="#3f97d6" strokeWidth="1.300" />
          <ellipse cx="17" cy="21.500" rx="7" ry="3.500" fill="#cfcfcf" />
        </svg>
      </div>
      <div className="flex w-[61px] items-center justify-center border-b-[3px] border-[#e773d6] bg-[#3c3c3c]">
        <svg width="28" height="28" viewBox="-14 -14 28 28" className="mt-[2px]">
          <circle r="13.500" fill="#ffcd40" />
          <path d="M-11.700-6.750A13.500 13.500 0 0 1 11.700-6.750H0L-5.500 3.200z" fill="#dd4b3e" />
          <path d="M-11.700-6.750A13.500 13.500 0 0 0 0 13.500L5.800 3.300-5.800 3.300z" fill="#1da362" />
          <circle r="6.200" fill="#fff" /><circle r="4.900" fill="#4c8bf5" />
        </svg>
      </div>
      <div className="flex w-[61px] items-center justify-center"><FaSpotify size={28} color="#1ed760" /></div>
      <div className="flex w-[63px] flex-col items-center justify-end">
        <svg width="29" height="31" viewBox="0 0 29 31" className="mb-[8px]">
          <g stroke="#222" strokeWidth=".7">
            <rect x="15" y="1" width="12" height="10" fill="#d5d5d5" /><rect x="17" y="3" width="8" height="6" fill="#1212e0" /><path d="M14 11h13l1.500 3h-14z" fill="#c0c0c0" />
            <rect x="3" y="17" width="12" height="10" fill="#d5d5d5" /><rect x="5" y="19" width="8" height="6" fill="#1212e0" /><path d="M2 27h13l1.500 3h-15z" fill="#eee" />
          </g>
          <path d="M19 8l-8 7 4 .5-4 6 9-7.500-4-.5z" fill="#ffe800" />
        </svg>
        <div className="h-[3px] w-[51px] bg-[#e773d6]" />
      </div>
      <div className="flex-1" />
      <svg width="150" height="50" viewBox="1620 1030 150 50" fill="none" stroke="#fff" strokeWidth="1.500">
        <path d="M1622.500 1059l7.500-8 7.500 8" />
        <path d="M1660.500 1051.500h3l4-4v15l-4-4h-3zM1671 1052q1.500 3 0 6" />
        <path d="M1674 1049.500q4 5.500 0 11M1677 1047q5 8 0 16" stroke="#777" strokeWidth="1.200" />
        <rect x="1706" y="1051" width="12" height="9" fill="#fff" />
        <path d="M1719.500 1053v5M1702.500 1054v6h3M1700.500 1048h4v4l-2 2-2-2z" strokeWidth="1.300" />
        <path d="M1743.500 1063q0-14 14-14M1747 1063q0-10.500 10.500-10.500M1751 1063q0-6.500 6.500-6.500" strokeWidth="1.300" />
        <circle cx="1756.500" cy="1061.500" r="1.500" fill="#fff" stroke="none" />
      </svg>
      <div className="flex w-[85px] flex-col items-center justify-center text-[15px] leading-[23px] text-white">
        <Fit w={53}>2:58 PM</Fit>
        <Fit w={76}>11/24/2018</Fit>
      </div>
      <div className="flex w-[59px] items-center pl-[13px]">
        <svg width="22" height="22" viewBox="0 0 22 22" fill="none" stroke="#fff" strokeWidth="1.500"><path d="M1.500 1.500h19v16h-6.500l-3 3-3-3H1.500z" /></svg>
      </div>
      <div className="w-[6px] border-l border-[#777]" />
    </div>
  );
}

export default function App() {
  return (
    <div className={"flex h-[1080px] w-[1920px] flex-col overflow-hidden bg-[#1c1c1c] " + UI}>
      <TabStrip />
      <AddressBar />
      <Bookmarks />
      <div className="h-[4px] shrink-0" />
      <MenuBar />
      <div className="h-[6px] shrink-0" />
      <ToolBar />
      <div className="h-[4px] shrink-0" />
      <div className="flex h-[762px] shrink-0">
        <Sidebar />
        <div className="flex w-[12px] flex-col bg-[#c1c1c1]">
          <div className="mt-[339px] h-[423px] rounded-full bg-[#919191]" />
        </div>
        <div className="w-[13px] bg-[#1c1c1c]">
          <div className="mt-[318px] flex h-[125px] items-center justify-center border border-[#0a1f33] bg-linear-to-b from-[#2a76bb] to-[#0b5ba0]">
            <svg width="5" height="5" viewBox="0 0 5 5"><path d="M5 0v5L0 2.500z" fill="#fff" /></svg>
          </div>
        </div>
        <div className="relative">
          <Canvas />
          <PropertiesPanel />
        </div>
      </div>
      <BottomBar />
      <Taskbar />
    </div>
  );
}
